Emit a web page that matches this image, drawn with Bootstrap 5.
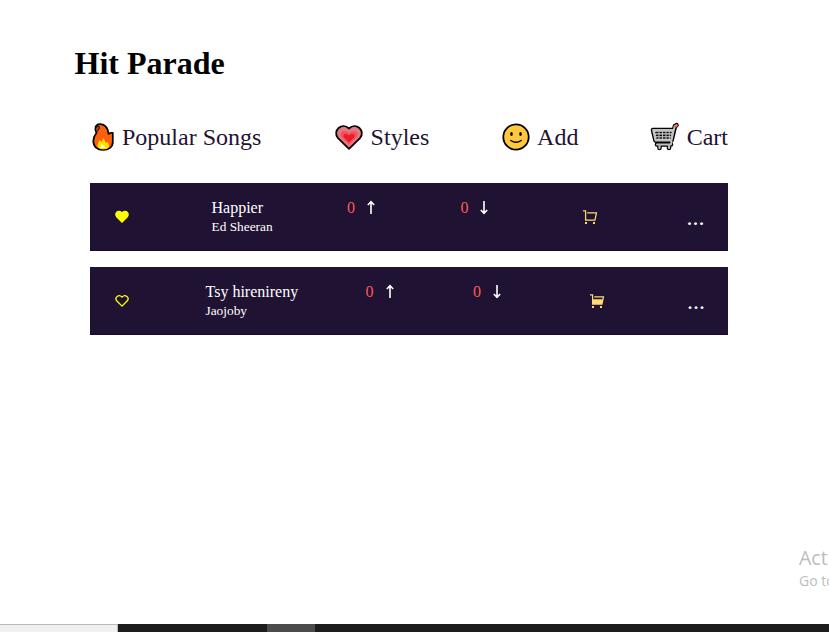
<!DOCTYPE html>
<html lang="en">
<head>
<meta charset="utf-8">
<meta name="viewport" content="width=device-width, initial-scale=1">
<title>Hit Parade</title>
<link href="https://cdn.jsdelivr.net/npm/bootstrap@5.3.0/dist/css/bootstrap.min.css" rel="stylesheet">
<style>
body{font-family:"Liberation Serif","Times New Roman",serif;color:#000;background:#fff;line-height:18px}
svg{display:block;flex:none}
.page-body{padding:45px 101px 0 74.5px}
.page-title{font-size:32px;line-height:37px;margin-bottom:37px}
.main-menu{margin-left:15.5px;height:36px;margin-bottom:28px}
.main-menu a{font-size:24px;line-height:36px;color:#1f1232;gap:7px}
.main-menu svg{width:30px;height:30px}
.main-menu .menu-fire{gap:6px}
.main-menu .menu-fire svg{width:26px}
.menu-styles{margin-left:1px}
.main-menu .menu-add{gap:6.5px}
.song-list{margin-left:15.5px}
.song{display:grid;height:68px;background:#1f1232;border-bottom:1px solid #180b29;color:#fff;padding-top:16px}
.song-a{grid-template-columns:25px 96.5px 135.5px 113.5px 122px 104px 1fr}
.song-b{grid-template-columns:25px 90.5px 160px 107.5px 117px 97px 1fr}
.artist{font-size:13.33px;line-height:20px}
.fav{color:#ff0;grid-column:2;padding-top:11px}
.votes{color:#ff5757}
.votes svg{margin:1px 0 0 11px}
.song-a .votes-down svg{margin-left:10px}
.buy{color:#ffd972;padding-top:10px}
.more{font-size:24px;line-height:26px;padding-top:5px}
.desktop-notice{font-family:"Open Sans","Noto Sans",sans-serif;color:#bdbdbd;padding-left:799px;padding-top:211px;white-space:nowrap}
.notice-title{font-size:19.5px;line-height:24px}
.notice-text{font-size:14px;line-height:21px}
.taskbar{height:8px;background:#1d1d1d}
.task-search{width:118px;background:#f0f0f0;border-top:1px solid #b9b9b9;border-right:1px solid #b9b9b9}
.task-active{width:48px;margin-left:149px;background:#4b4b4b}
</style>
<script src="https://cdn.jsdelivr.net/npm/bootstrap@5.3.0/dist/js/bootstrap.bundle.min.js"></script>
</head>
<body class="vh-100 overflow-hidden d-flex flex-column">
<main class="page-body">
<h1 class="page-title fw-bold">Hit Parade</h1>
<nav class="main-menu d-flex justify-content-between">
<a class="menu-fire d-flex align-items-center text-decoration-none" href="#"><svg viewBox="0 0 26 30"><path d="M8 2.300C14 1 18 5 18.500 12l1.500-1 2.800-.2V20c0 5-4 8-9.800 8S3.300 24.500 3.300 19c0-4 1.700-6 3.200-8-2-4-1.500-7 1.500-8.700z" fill="#f9610e" stroke="#000" stroke-width="1.700" stroke-linejoin="round"/><path d="M6.500 10C4.800 6.500 6 4.500 9 4.200c1 2-.4 3.500-2.500 5.800z" fill="#c94e14" stroke="#000"/><path d="M7.500 23l2-5 2 2 2-4 2.500 5 2-1 1 4c0 2.200-2 3.200-5.500 3.200s-6-1-6-4.200z" fill="#ffe000"/><path d="M10 26l1.500-4 2 1.500L16 26z" fill="#fff8c5"/></svg>Popular Songs</a>
<a class="menu-styles d-flex align-items-center text-decoration-none" href="#"><svg viewBox="0 0 30 30"><path d="M15 26.800L4 16.200C-2 9 8 -.5 15 6.500 22-.5 32 9 26 16.200z" fill="#e97680" stroke="#000" stroke-width="1.800" stroke-linejoin="round"/><path d="M15 22.500L7.500 15.200C4 10 10 6.500 15 11c5-4.500 11-1 7.500 4.200z" fill="#f1525d"/><path d="M15 20.500l-5-5c-2-3 2-5 5-2 3-3 7-1 5 2z" fill="#ed1c24"/></svg>Styles</a>
<a class="menu-add d-flex align-items-center text-decoration-none" href="#"><svg viewBox="0 0 30 30"><circle cx="15" cy="15" r="12.700" fill="#ffc83d" stroke="#000" stroke-width="1.8"/><ellipse cx="10.500" cy="12" rx="1.300" ry="2.100"/><ellipse cx="19.500" cy="12" rx="1.300" ry="2.100"/><path d="M9.800 18.500q5.200 3.500 10.400 0" fill="none" stroke="#000" stroke-width="1.400" stroke-linecap="round"/></svg>Add</a>
<a class="d-flex align-items-center text-decoration-none" href="#"><svg viewBox="0 0 30 30"><g stroke-linejoin="round" stroke-linecap="round" fill="none"><path d="M3 8l2.500 10.500h16L25 4l1.500-.8M3 8h20M7 22.500h14M9.500 22.500v3.500M19 22.500v3.500" stroke="#000" stroke-width="4.600"/><path d="M3 8h20.500L21 18.500H5.500z" fill="#d2d2d2"/><path d="M6 10.500h15M6.500 13.300h14M7 16h13" stroke="#111" stroke-width="1.700"/><path d="M9 9.500v7.500M12.500 9.500v7.500M16 9.500v7.500M19.300 9.500v7.500" stroke="#c8c8c8" stroke-width=".9"/><path d="M3 8l2.500 10.500h16L24.500 5M3 8h20M21.500 18.500l-.5 4H7" stroke="#c2c2c2" stroke-width="1.900"/><path d="M25 4.200l1.500-.8" stroke="#f4735b" stroke-width="2.700"/><path d="M9.500 23v3M19 23v3" stroke="#b5b5b5" stroke-width="2.300"/></g></svg>Cart</a>
</nav>
<section class="song-list d-flex flex-column gap-3">
<article class="song song-a">
<div class="fav"><svg width="14" height="14" viewBox="0 0 14 14"><path d="M7 13L1.200 7.200C-2 3.300 3-1.500 7 2c4-3.500 9 1.300 5.800 5.200z" fill="currentColor"/></svg></div>
<div><div>Happier</div><div class="artist">Ed Sheeran</div></div>
<div class="votes d-flex align-items-start">0<svg width="10" height="16" viewBox="0 0 10 16"><path d="M5 14V2M1.800 5L5 1.700 8.200 5" fill="none" stroke="#fff" stroke-width="1.600"/></svg></div>
<div class="votes votes-down d-flex align-items-start">0<svg width="10" height="16" viewBox="0 0 10 16"><path d="M5 1v12M1.800 10L5 13.300 8.200 10" fill="none" stroke="#fff" stroke-width="1.600"/></svg></div>
<div class="buy"><svg width="16" height="16" viewBox="0 0 16 16" fill="none" stroke="currentColor" stroke-width="1.250"><path d="M0 1.800h2.600v9.300h9.300l1.600-7.300H4.200"/><path d="M2 14h2M10 14h2" stroke-width="2"/></svg></div>
<div class="more">...</div>
</article>
<article class="song song-b">
<div class="fav"><svg width="14" height="14" viewBox="0 0 14 14"><path d="M7 12.100L1.700 6.800C-.8 3.500 3.600-.3 7 3c3.400-3.300 7.800.5 5.300 3.800z" fill="none" stroke="currentColor" stroke-width="1.300"/></svg></div>
<div><div>Tsy hirenireny</div><div class="artist">Jaojoby</div></div>
<div class="votes d-flex align-items-start">0<svg width="10" height="16" viewBox="0 0 10 16"><path d="M5 14V2M1.800 5L5 1.700 8.200 5" fill="none" stroke="#fff" stroke-width="1.600"/></svg></div>
<div class="votes votes-down d-flex align-items-start">0<svg width="10" height="16" viewBox="0 0 10 16"><path d="M5 1v12M1.800 10L5 13.300 8.200 10" fill="none" stroke="#fff" stroke-width="1.600"/></svg></div>
<div class="buy"><svg width="16" height="16" viewBox="0 0 16 16" fill="none" stroke="currentColor" stroke-width="1.250"><path d="M0 1.800h2.600v9.300h9.300l1.600-7.300H4.200"/><path d="M2.500 6.200h10.300l-1 4.800H2.500z" fill="currentColor" stroke="none"/><path d="M2 14h2M10 14h2" stroke-width="2"/></svg></div>
<div class="more">...</div>
</article>
</section>
</main>
<aside class="desktop-notice overflow-hidden"><div class="notice-title">Act</div><div class="notice-text">Go to</div></aside>
<footer class="taskbar d-flex mt-auto flex-shrink-0"><div class="task-search"></div><div class="task-active"></div></footer>
</body>
</html>
